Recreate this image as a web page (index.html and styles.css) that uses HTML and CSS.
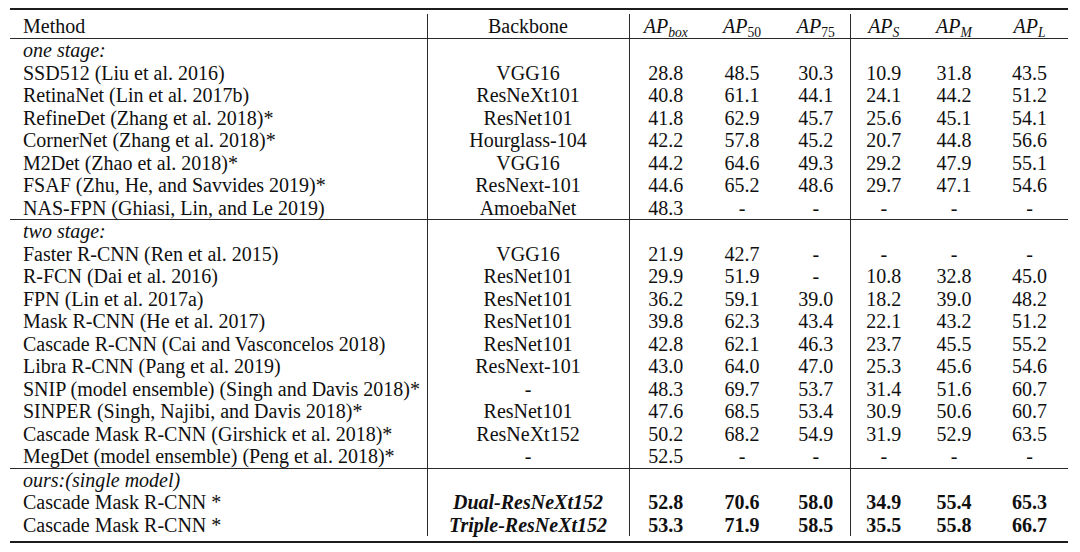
FILE: index.html
```html
<!DOCTYPE html>
<html>
<head>
<meta charset="utf-8">
<link rel="stylesheet" href="styles.css">
</head>
<body>
<div class="sheet">
  <div class="booktab">
    <table class="results">
      <colgroup>
        <col class="w-method"><col class="w-backbone"><col class="w-box"><col class="w-50"><col class="w-75"><col class="w-s"><col class="w-m"><col class="w-l">
      </colgroup>
      <thead>
        <tr class="rule-below head">
          <th class="method">Method</th>
          <th class="vsep">Backbone</th>
          <th class="vsep num"><span class="m">AP</span><sub class="m">box</sub></th>
          <th class="num"><span class="m">AP</span><sub>50</sub></th>
          <th class="num"><span class="m">AP</span><sub>75</sub></th>
          <th class="vsep num"><span class="m">AP</span><sub class="m">S</sub></th>
          <th class="num"><span class="m">AP</span><sub class="m">M</sub></th>
          <th class="num"><span class="m">AP</span><sub class="m">L</sub></th>
        </tr>
      </thead>
      <tbody>
        <tr><td class="method sect">one stage:</td><td class="vsep"></td><td class="vsep"></td><td></td><td></td><td class="vsep"></td><td></td><td></td></tr>
        <tr><td class="method">SSD512 (Liu et al. 2016)</td><td class="vsep">VGG16</td><td class="vsep">28.8</td><td>48.5</td><td>30.3</td><td class="vsep">10.9</td><td>31.8</td><td>43.5</td></tr>
        <tr><td class="method">RetinaNet (Lin et al. 2017b)</td><td class="vsep">ResNeXt101</td><td class="vsep">40.8</td><td>61.1</td><td>44.1</td><td class="vsep">24.1</td><td>44.2</td><td>51.2</td></tr>
        <tr><td class="method">RefineDet (Zhang et al. 2018)*</td><td class="vsep">ResNet101</td><td class="vsep">41.8</td><td>62.9</td><td>45.7</td><td class="vsep">25.6</td><td>45.1</td><td>54.1</td></tr>
        <tr><td class="method">CornerNet (Zhang et al. 2018)*</td><td class="vsep">Hourglass-104</td><td class="vsep">42.2</td><td>57.8</td><td>45.2</td><td class="vsep">20.7</td><td>44.8</td><td>56.6</td></tr>
        <tr><td class="method">M2Det (Zhao et al. 2018)*</td><td class="vsep">VGG16</td><td class="vsep">44.2</td><td>64.6</td><td>49.3</td><td class="vsep">29.2</td><td>47.9</td><td>55.1</td></tr>
        <tr><td class="method">FSAF (Zhu, He, and Savvides 2019)*</td><td class="vsep">ResNext-101</td><td class="vsep">44.6</td><td>65.2</td><td>48.6</td><td class="vsep">29.7</td><td>47.1</td><td>54.6</td></tr>
        <tr class="rule-below"><td class="method">NAS-FPN (Ghiasi, Lin, and Le 2019)</td><td class="vsep">AmoebaNet</td><td class="vsep">48.3</td><td>-</td><td>-</td><td class="vsep">-</td><td>-</td><td>-</td></tr>
        <tr><td class="method sect">two stage:</td><td class="vsep"></td><td class="vsep"></td><td></td><td></td><td class="vsep"></td><td></td><td></td></tr>
        <tr><td class="method">Faster R-CNN (Ren et al. 2015)</td><td class="vsep">VGG16</td><td class="vsep">21.9</td><td>42.7</td><td>-</td><td class="vsep">-</td><td>-</td><td>-</td></tr>
        <tr><td class="method">R-FCN (Dai et al. 2016)</td><td class="vsep">ResNet101</td><td class="vsep">29.9</td><td>51.9</td><td>-</td><td class="vsep">10.8</td><td>32.8</td><td>45.0</td></tr>
        <tr><td class="method">FPN (Lin et al. 2017a)</td><td class="vsep">ResNet101</td><td class="vsep">36.2</td><td>59.1</td><td>39.0</td><td class="vsep">18.2</td><td>39.0</td><td>48.2</td></tr>
        <tr><td class="method">Mask R-CNN (He et al. 2017)</td><td class="vsep">ResNet101</td><td class="vsep">39.8</td><td>62.3</td><td>43.4</td><td class="vsep">22.1</td><td>43.2</td><td>51.2</td></tr>
        <tr><td class="method">Cascade R-CNN (Cai and Vasconcelos 2018)</td><td class="vsep">ResNet101</td><td class="vsep">42.8</td><td>62.1</td><td>46.3</td><td class="vsep">23.7</td><td>45.5</td><td>55.2</td></tr>
        <tr><td class="method">Libra R-CNN (Pang et al. 2019)</td><td class="vsep">ResNext-101</td><td class="vsep">43.0</td><td>64.0</td><td>47.0</td><td class="vsep">25.3</td><td>45.6</td><td>54.6</td></tr>
        <tr><td class="method">SNIP (model ensemble) (Singh and Davis 2018)*</td><td class="vsep">-</td><td class="vsep">48.3</td><td>69.7</td><td>53.7</td><td class="vsep">31.4</td><td>51.6</td><td>60.7</td></tr>
        <tr><td class="method">SINPER (Singh, Najibi, and Davis 2018)*</td><td class="vsep">ResNet101</td><td class="vsep">47.6</td><td>68.5</td><td>53.4</td><td class="vsep">30.9</td><td>50.6</td><td>60.7</td></tr>
        <tr><td class="method">Cascade Mask R-CNN (Girshick et al. 2018)*</td><td class="vsep">ResNeXt152</td><td class="vsep">50.2</td><td>68.2</td><td>54.9</td><td class="vsep">31.9</td><td>52.9</td><td>63.5</td></tr>
        <tr class="rule-below"><td class="method">MegDet (model ensemble) (Peng et al. 2018)*</td><td class="vsep">-</td><td class="vsep">52.5</td><td>-</td><td>-</td><td class="vsep">-</td><td>-</td><td>-</td></tr>
        <tr><td class="method sect">ours:(single model)</td><td class="vsep"></td><td class="vsep"></td><td></td><td></td><td class="vsep"></td><td></td><td></td></tr>
        <tr class="best"><td class="method">Cascade Mask R-CNN *</td><td class="vsep bb">Dual-ResNeXt152</td><td class="vsep">52.8</td><td>70.6</td><td>58.0</td><td class="vsep">34.9</td><td>55.4</td><td>65.3</td></tr>
        <tr class="best"><td class="method">Cascade Mask R-CNN *</td><td class="vsep bb">Triple-ResNeXt152</td><td class="vsep">53.3</td><td>71.9</td><td>58.5</td><td class="vsep">35.5</td><td>55.8</td><td>66.7</td></tr>
      </tbody>
    </table>
  </div>
</div>
</body>
</html>
```
FILE: styles.css
```css
html, body {
  margin: 0;
  padding: 0;
  background: #ffffff;
}

.sheet {
  padding: 8px 12px 0 10px;
}

.booktab {
  width: 1058px;
  border-top: 2px solid #1c1c1c;
  border-bottom: 2px solid #1c1c1c;
  padding: 4px 0 5px 0;
}

.results {
  width: 1058px;
  table-layout: fixed;
  border-collapse: collapse;
  font-family: "Liberation Serif", "Times New Roman", serif;
  font-size: 20px;
  color: #101010;
}

.w-method { width: 417px; }
.w-backbone { width: 202px; }
.w-box { width: 73px; }
.w-50 { width: 80px; }
.w-75 { width: 68px; }
.w-s { width: 67px; }
.w-m { width: 74px; }
.w-l { width: 77px; }

.results th,
.results td {
  padding: 0;
  height: 22.5px;
  line-height: 22.5px;
  text-align: center;
  white-space: nowrap;
  font-weight: normal;
  vertical-align: middle;
}

.results tr.head > th {
  height: 24px;
  line-height: 24px;
}

.results .method {
  text-align: left;
  padding-left: 13px;
}

.results .vsep {
  border-left: 1px solid #2a2a2a;
}

.results tr.rule-below > th,
.results tr.rule-below > td {
  border-bottom: 1px solid #2a2a2a;
}

.results .sect {
  font-style: italic;
}

.m {
  font-style: italic;
}

.results sub {
  font-size: 68%;
  line-height: 0;
  vertical-align: -0.28em;
}

.best td {
  font-weight: bold;
}

.best td.method {
  font-weight: normal;
}

.best td.bb {
  font-style: italic;
}
```
